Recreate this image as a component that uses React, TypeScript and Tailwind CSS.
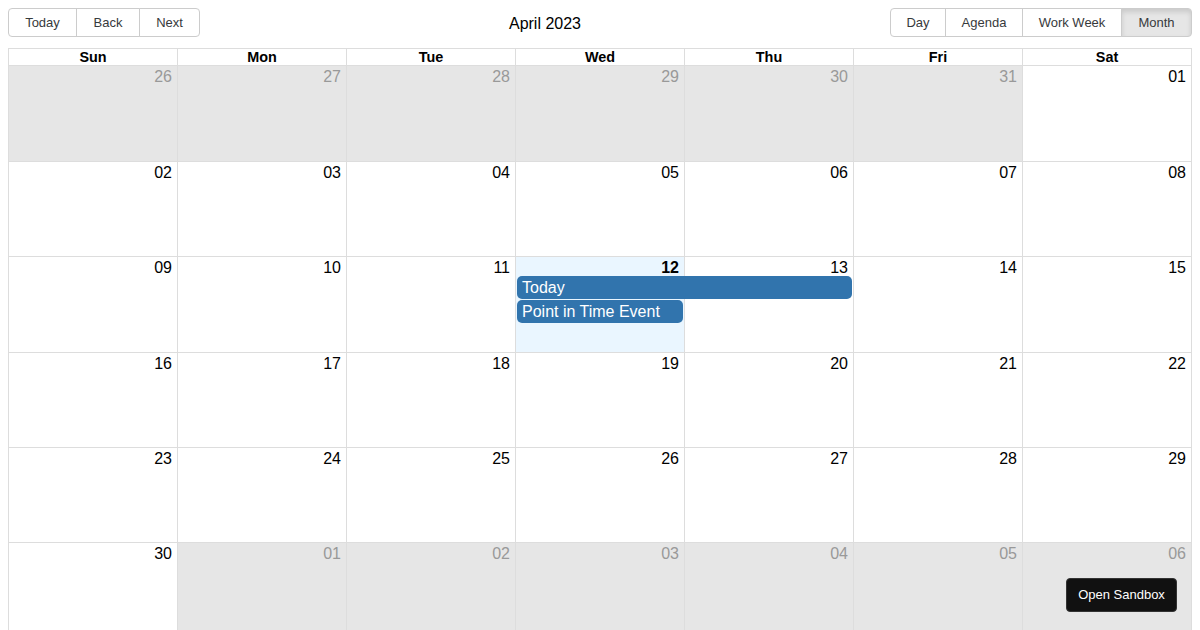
import React from "react";

const DAYS = ["Sun", "Mon", "Tue", "Wed", "Thu", "Fri", "Sat"];

type Cell = { label: string; off?: boolean; today?: boolean };

const WEEKS: Cell[][] = [
  ["26", "27", "28", "29", "30", "31"].map((d) => ({ label: d, off: true } as Cell)).concat([{ label: "01" }]),
  ["02", "03", "04", "05", "06", "07", "08"].map((d) => ({ label: d })),
  ["09", "10", "11", "12", "13", "14", "15"].map((d) => ({ label: d, today: d === "12" })),
  ["16", "17", "18", "19", "20", "21", "22"].map((d) => ({ label: d })),
  ["23", "24", "25", "26", "27", "28", "29"].map((d) => ({ label: d })),
  [{ label: "30" } as Cell].concat(["01", "02", "03", "04", "05", "06"].map((d) => ({ label: d, off: true }))),
];

const COLS = "grid grid-cols-[168px_repeat(6,169px)]";

function ToolbarButton({ label, first, last, active, w }: { label: string; first?: boolean; last?: boolean; active?: boolean; w: string }) {
  return (
    <button
      className={[
        "h-[29px] border border-[#ccc] text-[13px] text-[#373a3c] leading-none",
        w,
        first ? "rounded-l-[4px]" : "-ml-px",
        last ? "rounded-r-[4px]" : "",
        active ? "bg-[#e6e6e6] border-[#adadad] shadow-[inset_0_3px_5px_rgba(0,0,0,0.125)]" : "bg-white",
      ].join(" ")}
    >
      {label}
    </button>
  );
}

function Event({ title, span }: { title: string; span: number }) {
  const cls = span === 2 ? "col-span-2" : "col-span-1";
  return (
    <div className={`col-start-4 ${cls} pl-[2px] pr-[1px] pb-px`}>
      <div className="bg-[#3174ad] text-white rounded-[5px] px-[5px] h-[23px] flex items-center text-[16px] leading-none truncate">
        {title}
      </div>
    </div>
  );
}

export default function App() {
  return (
    <div className="relative h-[630px] overflow-hidden bg-white p-2 font-['Liberation_Sans',Arial,sans-serif] text-black">
      {/* Toolbar */}
      <div className="flex items-center mb-[11px]">
        <div className="flex">
          <ToolbarButton label="Today" first w="w-[69px]" />
          <ToolbarButton label="Back" w="w-[64px]" />
          <ToolbarButton label="Next" last w="w-[61px]" />
        </div>
        <div className="flex-1 text-center text-[16px] pt-[2px]">April 2023</div>
        <div className="flex">
          <ToolbarButton label="Day" first w="w-[56px]" />
          <ToolbarButton label="Agenda" w="w-[78px]" />
          <ToolbarButton label="Work Week" w="w-[100px]" />
          <ToolbarButton label="Month" last active w="w-[71px]" />
        </div>
      </div>

      {/* Month view */}
      <div className="border border-[#ddd] flex flex-col h-[590px]">
        <div className={`${COLS} h-[17px] border-b border-[#ddd]`}>
          {DAYS.map((d, i) => (
            <div
              key={d}
              className={`text-center text-[14.4px] font-bold leading-[16px] ${i > 0 ? "border-l border-[#ddd]" : ""}`}
            >
              {d}
            </div>
          ))}
        </div>

        {WEEKS.map((week, wi) => (
          <div key={wi} className={`grid h-[95.2px] shrink-0 ${wi > 0 ? "border-t border-[#ddd]" : ""}`}>
            {/* background cells */}
            <div className={`[grid-area:1/1] ${COLS}`}>
              {week.map((c, i) => (
                <div
                  key={i}
                  className={[
                    i > 0 ? "border-l border-[#ddd]" : "",
                    c.off ? "bg-[#e6e6e6]" : c.today ? "bg-[#eaf6ff]" : "bg-white",
                  ].join(" ")}
                />
              ))}
            </div>
            {/* content */}
            <div className={`[grid-area:1/1] ${COLS} content-start`}>
              {week.map((c, i) => (
                <div
                  key={i}
                  className={`text-right pr-[5px] pt-[2px] h-[19px] text-[16px] leading-[18px] ${
                    c.off ? "text-[#999]" : "text-black"
                  } ${c.today ? "font-bold" : ""}`}
                >
                  {c.label}
                </div>
              ))}
              {wi === 2 && (
                <>
                  <Event title="Today" span={2} />
                  <Event title="Point in Time Event" span={1} />
                </>
              )}
            </div>
          </div>
        ))}
      </div>

      <button className="absolute left-[1066px] top-[578px] w-[111px] h-[34px] bg-[#111] text-white text-[13px] rounded-[4px] border border-[#333]">
        Open Sandbox
      </button>
    </div>
  );
}
